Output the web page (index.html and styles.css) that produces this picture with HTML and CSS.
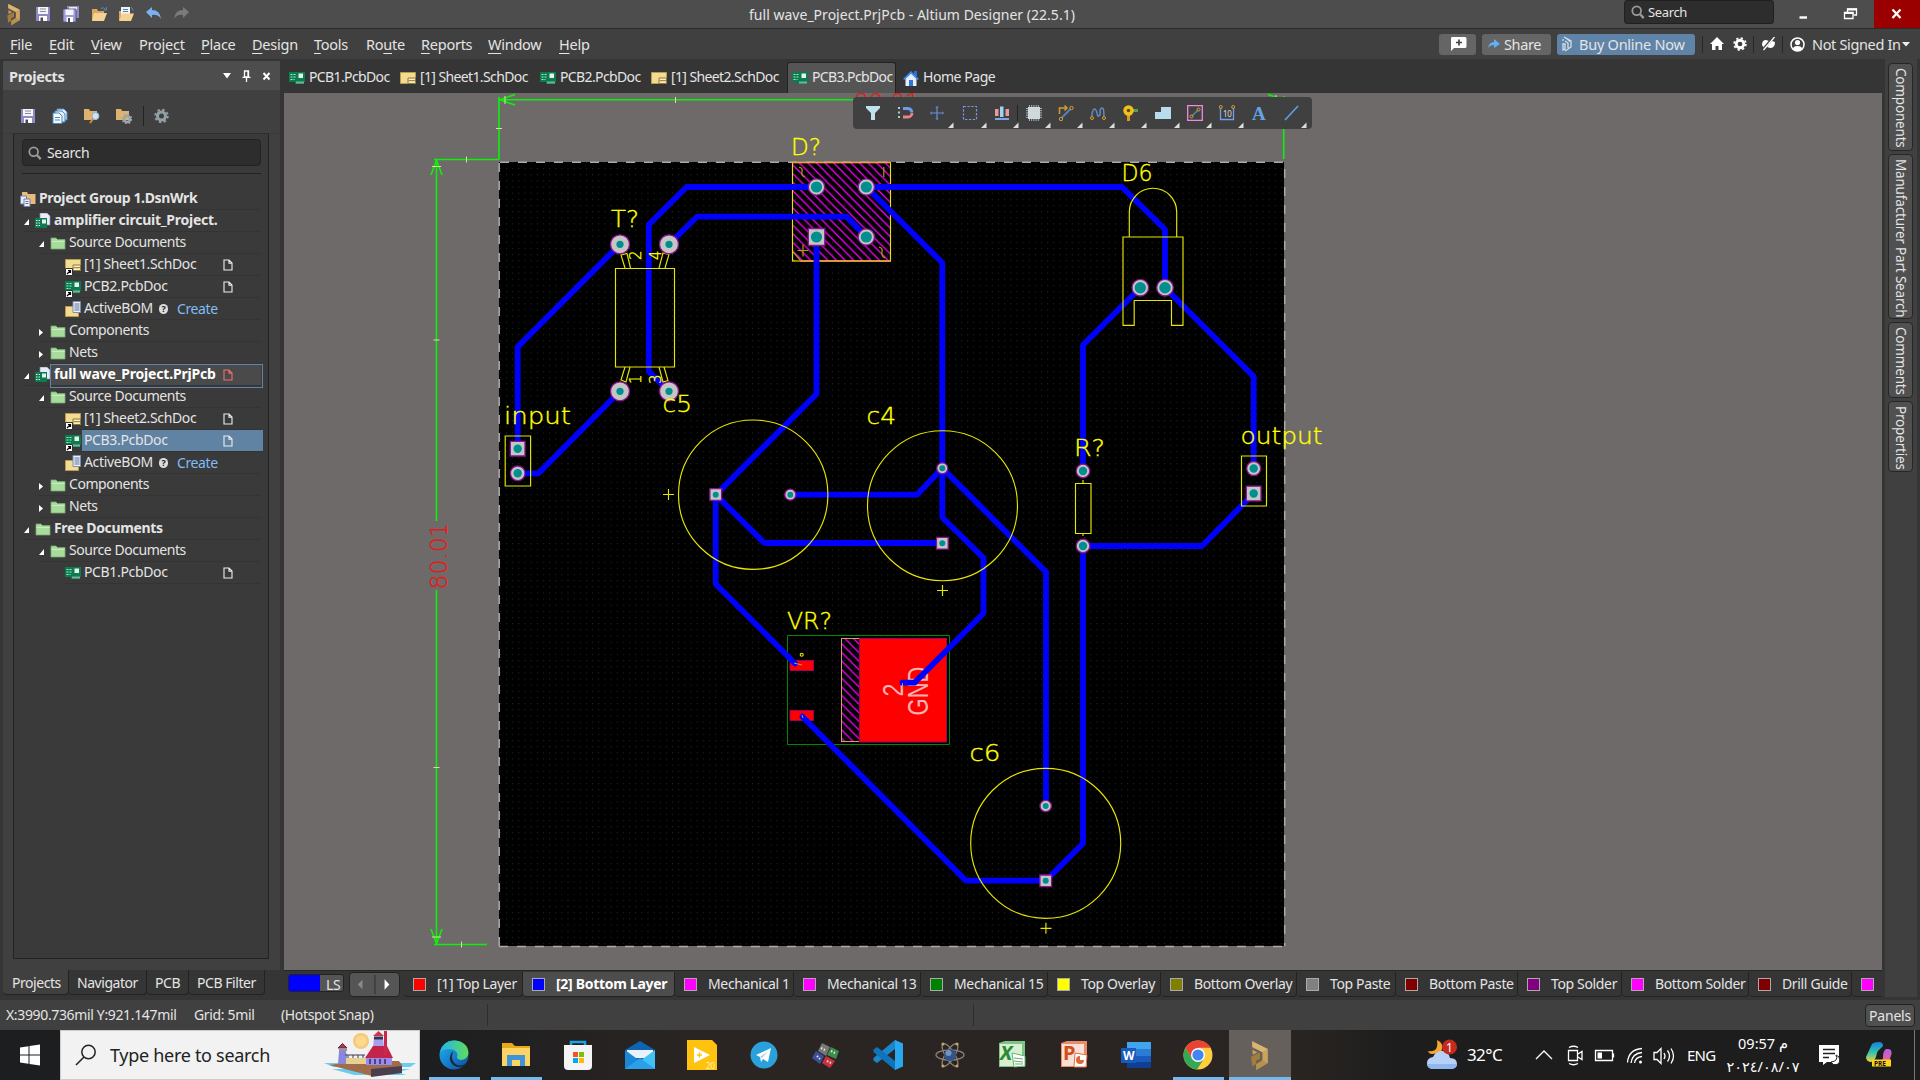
FILE: index.html
```html
<!DOCTYPE html>
<html lang="en">
<head>
<meta charset="utf-8">
<title>full wave_Project.PrjPcb - Altium Designer (22.5.1)</title>
<link rel="stylesheet" href="styles.css">
</head>
<body>
<svg class="defs" width="0" height="0">
  <defs>
    <symbol id="save" viewBox="0 0 16 16"><path d="M1 1h14v14H1z" fill="#8d8bc4"/><path d="M3 1h10v7H3z" fill="#f4f4fa"/><path d="M5 3h6M5 5.500h6" stroke="#8a8a99"/><path d="M4 10h8v5H4z" fill="#fff"/><path d="M5.500 11.500h2.500V15H5.500z" fill="#44446c"/></symbol>
    <symbol id="saveall" viewBox="0 0 16 16"><path d="M4 0h12v12H4z" fill="#8d8bc4"/><path d="M6 1h8v3H6z" fill="#eee"/><path d="M0 3h13v13H0z" fill="#a09ed6" stroke="#44446c" stroke-width=".7"/><path d="M2.500 3.500h8V9h-8z" fill="#f4f4fa"/><path d="M3.500 11h6.500v5H3.500z" fill="#fff"/><path d="M5 12h2v4H5z" fill="#44446c"/></symbol>
    <symbol id="open" viewBox="0 0 16 16"><path d="M1 3h5l1 2h6v9H1z" fill="#d9a95f"/><path d="M3 7h13l-3 8H1z" fill="#f6d193"/><path d="M10 2.500q3-2 4.500 1M15.500 1v3h-3" fill="none" stroke="#4a8fc0"/></symbol>
    <symbol id="opendoc" viewBox="0 0 16 16"><path d="M1 5h3v9H1z" fill="#d9a95f"/><path d="M3 1h9v10H3z" fill="#eef4fb"/><path d="M5 3.500h5M5 5.500h5" stroke="#5582aa"/><path d="M4 7.500h12L13 15H1z" fill="#f6d193"/><path d="M13 1.500q2 0 2 3" fill="none" stroke="#4a8fc0"/></symbol>
    <symbol id="undo" viewBox="0 0 16 16"><path d="M0 6l6-5v3q8 0 9 9-3-5-9-4v3z" fill="#7db1ee"/></symbol>
    <symbol id="redo" viewBox="0 0 16 16"><path d="M16 6l-6-5v3q-8 0-9 9 3-5 9-4v3z" fill="#7b7b7b"/></symbol>
    <symbol id="pcb" viewBox="0 0 16 16"><path d="M0 2h16v10h-1v2H6v-2H0z" fill="#0d7b50"/><path d="M1.500 4.500h5M1.500 7h5M1.500 9.500h4" stroke="#a5e9c0" stroke-width="1.200" stroke-dasharray="2 1"/><path d="M9.500 3.500h4.500v4.500H9.500z" fill="#e5f2ea"/><path d="M7.500 12.500h7" stroke="#d2f0dd" stroke-width="2" stroke-dasharray="1 1"/></symbol>
    <symbol id="sch" viewBox="0 0 16 16"><path d="M.5 2.500h15v11H.5z" fill="#f3dc8f" stroke="#b89b54"/><path d="M8 8h7.500v5.500H8z" fill="#fbeeb7" stroke="#8c773c"/><path d="M8.500 10.700h6.500" stroke="#8c773c"/></symbol>
    <symbol id="short" viewBox="0 0 8 8"><path d="M.5.5h7v7h-7z" fill="#fff" stroke="#333"/><path d="M2 6l3-3M3 2.500h2.500V5" stroke="#000" fill="none" stroke-width="1.200"/></symbol>
    <symbol id="bom" viewBox="0 0 16 16"><path d="M.5 5.500h13v10H.5z" fill="#f3dc8f" stroke="#b89b54"/><path d="M8 .5h7.500v11H8z" fill="#edf1fa" stroke="#7b8db4"/><path d="M9.500 3h5M9.500 5h5M9.500 7h5M9.500 9h5" stroke="#5a6f9d"/></symbol>
    <symbol id="folder" viewBox="0 0 16 16"><path d="M1 3h5l1.500 1.500H15V14H1z" fill="#a8dc9c" stroke="#77a86e" stroke-width=".8"/><path d="M1.500 6h13v1h-13z" fill="#c6eebc"/></symbol>
    <symbol id="prj" viewBox="0 0 16 16"><path d="M5 0h7l3 3v9H5z" fill="#e9edf8" stroke="#8894b5" stroke-width=".7"/><path d="M0 5h12v10H0z" fill="#0d7b50"/><path d="M1 7.500h4M1 10h4M1 12.500h4" stroke="#d9f5e3" stroke-dasharray="1.500 1"/><path d="M7 6.500h4v4H7z" fill="#e5f2ea"/></symbol>
    <symbol id="grp" viewBox="0 0 16 16"><path d="M2 1h5l1 2h7.500v10H2z" fill="#e9bb79"/><path d="M.5 5h6v8h-6z" fill="#e6ecf8" stroke="#6f7fa8"/><path d="M4 8h6v7.500H4z" fill="#edf1fa" stroke="#6f7fa8"/><path d="M5.500 10.500h3M5.500 12.500h3" stroke="#5a6f9d"/></symbol>
    <symbol id="doc" viewBox="0 0 10 12"><path d="M1 1h5l3 3v7H1zM6 1v3.200h3" fill="none" stroke="currentColor" stroke-width="1.100"/></symbol>
    <symbol id="gear" viewBox="0 0 16 16"><circle cx="8" cy="8" r="4.300" fill="none" stroke="currentColor" stroke-width="3.200"/><circle cx="8" cy="8" r="6.700" fill="none" stroke="currentColor" stroke-width="2" stroke-dasharray="2.600 2.660"/></symbol>
    <symbol id="mag" viewBox="0 0 16 16"><circle cx="6.500" cy="6.500" r="5" fill="none" stroke="currentColor" stroke-width="2"/><path d="M10.500 10.500l4 4.500" stroke="currentColor" stroke-width="2.600"/></symbol>
    <symbol id="logo" viewBox="0 0 16 24"><path d="M2 1l12 6v11L5 23.500v-5l5-3V9.500L2 6z" fill="#b8924d"/><path d="M2 1l12 6-4 2.500L2 5z" fill="#d9b571"/><path d="M10 9.500L14 7v11l-4-2.500z" fill="#c9a35f"/><path d="M1 13l7-3.500v5L5 16v2.500l-3 2z" fill="#a17c3d"/><path d="M2 7.500l4 2-3.500 2z" fill="#c9a35f"/></symbol>
    <path id="tri" d="M24.500 17.500V23h-5.500z" fill="#ddd"/>
    <pattern id="dots" x="506" y="168" width="6.150" height="6.150" patternUnits="userSpaceOnUse"><path d="M0 0h1v1H0z" fill="#262626"/></pattern>
    <pattern id="hatch" width="8.600" height="8.600" patternUnits="userSpaceOnUse"><path d="M-1-1l11 11M-1 7.600l2.200 2.200M7.600-1l2 2" stroke="#f0f" stroke-width="1.200"/></pattern>
    <linearGradient id="edge" x1="0" y1="0" x2="1" y2="1"><stop offset="0" stop-color="#1cb4e8"/><stop offset=".5" stop-color="#1681d0"/><stop offset="1" stop-color="#0c4a9d"/></linearGradient>
    <linearGradient id="edge2" x1="0" y1="0" x2="1" y2="0"><stop offset="0" stop-color="#22b3ee"/><stop offset="1" stop-color="#5fdc5a"/></linearGradient>
    <linearGradient id="cop" x1="0" y1="0" x2="0" y2="1"><stop offset="0" stop-color="#1b7fe0"/><stop offset=".5" stop-color="#2cc3b0"/><stop offset="1" stop-color="#f3d43a"/></linearGradient>
    <linearGradient id="cop2" x1="0" y1="0" x2="0" y2="1"><stop offset="0" stop-color="#b45cf0"/><stop offset="1" stop-color="#fb6a6a"/></linearGradient>
  </defs>
</svg>
<div class="app">
  <header class="title">
    <div class="quick">
      <svg class="q-logo"><use href="#logo"/></svg>
      <svg><use href="#save"/></svg><svg><use href="#saveall"/></svg><svg><use href="#open"/></svg><svg><use href="#opendoc"/></svg><svg><use href="#undo"/></svg><svg><use href="#redo"/></svg>
    </div>
    <div class="caption">full wave_Project.PrjPcb - Altium Designer (22.5.1)</div>
    <div class="winbar">
      <div class="tsearch"><svg><use href="#mag"/></svg><span>Search</span></div>
      <svg class="wb" viewBox="0 0 46 28"><path d="M17.500 17.500h7.500" stroke="#fff" stroke-width="2.400"/></svg>
      <svg class="wb" viewBox="0 0 46 28"><path d="M19.500 13v-4h9v6h-3" fill="none" stroke="#fff" stroke-width="1.300"/><path d="M19 9.500h10" stroke="#fff" stroke-width="2"/><path d="M16.500 12.500h8.500v6h-8.500z" fill="none" stroke="#fff" stroke-width="1.300"/><path d="M16 13h9.500" stroke="#fff" stroke-width="2"/></svg>
      <svg class="wb close" viewBox="0 0 46 28"><path d="M18.500 9.500l8 8.500M26.500 9.500l-8 8.500" stroke="#fff" stroke-width="2.200"/></svg>
    </div>
  </header>
  <nav class="menu">
    <div class="items"><span><u>F</u>ile</span><span><u>E</u>dit</span><span><u>V</u>iew</span><span>Proje<u>c</u>t</span><span><u>P</u>lace</span><span><u>D</u>esign</span><span><u>T</u>ools</span><span>Ro<u>u</u>te</span><span><u>R</u>eports</span><span><u>W</u>indow</span><span><u>H</u>elp</span></div>
    <div class="account">
      <div class="btn note"><svg width="18" height="16" viewBox="0 0 18 16"><path d="M3 1h13q1.500 0 1.500 1.500v8q0 1.500-1.500 1.500H5l-3 3V2.500Q2 1 3 1z" fill="#fff"/><path d="M10 3.500v6M7 6.500h6" stroke="#444" stroke-width="1.700"/></svg></div>
      <div class="btn share"><svg width="12" height="12" viewBox="0 0 12 12"><path d="M0 10q1-6 6-6V1l6 5-6 4V7Q2 7 0 10z" fill="#64b0f4"/></svg><span>Share</span></div>
      <div class="btn buy"><svg width="11" height="16" viewBox="0 0 11 16"><path d="M2 1l7 4v6l-6 4M3 5l3 2v5M5 3l3 2.500M1 3v2M1 8v6l2-1V8z" fill="none" stroke="#d6dfe8" stroke-width="1.300"/></svg><span>Buy Online Now</span></div>
      <i class="vs"></i>
      <svg width="14" height="14" viewBox="0 0 14 14"><path d="M7 0l7 7h-2v6H8.500V9h-3v4H2V7H0z" fill="#fff"/></svg>
      <svg class="g" width="14" height="14"><use href="#gear"/></svg>
      <i class="vs"></i>
      <svg width="15" height="14" viewBox="0 0 15 14"><path d="M1 8q0-5 4-5l3 1L3 11zM14 5q0 6-5 6l-3-1 5-6z" fill="#fff"/><path d="M12 0L1 13" stroke="#404040" stroke-width="1.500"/><path d="M13.500 0L2.500 13" stroke="#fff" stroke-width="1.300"/></svg>
      <i class="vs"></i>
      <svg width="15" height="15" viewBox="0 0 15 15"><circle cx="7.500" cy="7.500" r="6.500" fill="none" stroke="#fff" stroke-width="1.500"/><circle cx="7.500" cy="5.500" r="2.600" fill="#fff"/><path d="M3 12q0-3 4.500-3t4.500 3l-2 2H5z" fill="#fff"/></svg>
      <span class="signin">Not Signed In</span>
      <svg width="8" height="5" viewBox="0 0 8 5"><path d="M0 0h8L4 4.500z" fill="#eee"/></svg>
    </div>
  </nav>
  <main class="work">
    <aside class="panel">
      <div class="phead"><b>Projects</b><svg width="50" height="12" viewBox="0 0 50 12"><path d="M0 3h8L4 8.500z" fill="#fff"/><path d="M21.500 1h4v6h-4zM25 1v6M19.500 7.300h8M23.500 7v5" fill="none" stroke="#fff" stroke-width="1.300"/><path d="M40.500 3l6 6.500M46.500 3l-6 6.500" stroke="#fff" stroke-width="1.900"/></svg></div>
      <div class="ptools">
        <svg><use href="#save"/></svg>
        <svg viewBox="0 0 16 16"><path d="M5 1h7l3 3v8H5z" fill="#dcecf8" stroke="#4e88ba"/><path d="M3 3h7l3 3v8H3z" fill="#dcecf8" stroke="#4e88ba"/><path d="M1 5h6l3 3v7.500H1z" fill="#f4faff" stroke="#4e88ba"/><path d="M3 9.500h5M3 12h5" stroke="#4e88ba"/></svg>
        <svg viewBox="0 0 16 16"><path d="M0 1h5l1 2h7v9H0z" fill="#dfb271"/><circle cx="11.500" cy="8" r="3.500" fill="#cfe4f3" stroke="#8eb0c8"/><path d="M9 11l-3 4" stroke="#d78b38" stroke-width="2"/></svg>
        <svg viewBox="0 0 16 16"><path d="M0 1h5l1 2h7v9H0z" fill="#dfb271"/><circle cx="11" cy="11" r="3" fill="none" stroke="#9aa7ac" stroke-width="2.600"/><circle cx="11" cy="11" r="4.600" fill="none" stroke="#9aa7ac" stroke-width="1.500" stroke-dasharray="1.800 1.800"/></svg>
        <i></i>
        <svg class="pg"><use href="#gear"/></svg>
      </div>
      <div class="tree">
        <div class="search"><svg><use href="#mag"/></svg><span>Search</span></div>
        <div class="rows">
          <div class="row l0"><svg class="ic"><use href="#grp"/></svg><b>Project Group 1.DsnWrk</b></div>
          <div class="row l1 open"><em></em><svg class="ic"><use href="#prj"/></svg><b class="w1">amplifier circuit_Project.</b></div>
          <div class="row l2 open"><em></em><svg class="ic"><use href="#folder"/></svg><span>Source Documents</span></div>
          <div class="row l3"><svg class="ic"><use href="#sch"/></svg><svg class="sc"><use href="#short"/></svg><span>[1] Sheet1.SchDoc</span><svg class="dc"><use href="#doc"/></svg></div>
          <div class="row l3"><svg class="ic"><use href="#pcb"/></svg><svg class="sc"><use href="#short"/></svg><span>PCB2.PcbDoc</span><svg class="dc"><use href="#doc"/></svg></div>
          <div class="row l3"><svg class="ic"><use href="#bom"/></svg><span>ActiveBOM</span><q>?</q><a>Create</a></div>
          <div class="row l2 shut"><em></em><svg class="ic"><use href="#folder"/></svg><span>Components</span></div>
          <div class="row l2 shut"><em></em><svg class="ic"><use href="#folder"/></svg><span>Nets</span></div>
          <div class="row l1 open cur"><em></em><svg class="ic"><use href="#prj"/></svg><b class="w2">full wave_Project.PrjPcb</b><svg class="dc red"><use href="#doc"/></svg></div>
          <div class="row l2 open"><em></em><svg class="ic"><use href="#folder"/></svg><span>Source Documents</span></div>
          <div class="row l3"><svg class="ic"><use href="#sch"/></svg><svg class="sc"><use href="#short"/></svg><span>[1] Sheet2.SchDoc</span><svg class="dc"><use href="#doc"/></svg></div>
          <div class="row l3 sel"><svg class="ic"><use href="#pcb"/></svg><svg class="sc"><use href="#short"/></svg><span>PCB3.PcbDoc</span><svg class="dc"><use href="#doc"/></svg></div>
          <div class="row l3"><svg class="ic"><use href="#bom"/></svg><span>ActiveBOM</span><q>?</q><a>Create</a></div>
          <div class="row l2 shut"><em></em><svg class="ic"><use href="#folder"/></svg><span>Components</span></div>
          <div class="row l2 shut"><em></em><svg class="ic"><use href="#folder"/></svg><span>Nets</span></div>
          <div class="row l1 open"><em></em><svg class="ic"><use href="#folder"/></svg><b>Free Documents</b></div>
          <div class="row l2 open"><em></em><svg class="ic"><use href="#folder"/></svg><span>Source Documents</span></div>
          <div class="row l3"><svg class="ic"><use href="#pcb"/></svg><span>PCB1.PcbDoc</span><svg class="dc"><use href="#doc"/></svg></div>
        </div>
      </div>
      <div class="ptabs"><span class="on">Projects</span><span>Navigator</span><span>PCB</span><span>PCB Filter</span></div>
    </aside>
    <section class="center">
      <div class="tabs">
        <div><svg><use href="#pcb"/></svg><span>PCB1.PcbDoc</span></div>
        <div><svg><use href="#sch"/></svg><span>[1] Sheet1.SchDoc</span></div>
        <div><svg><use href="#pcb"/></svg><span>PCB2.PcbDoc</span></div>
        <div><svg><use href="#sch"/></svg><span>[1] Sheet2.SchDoc</span></div>
        <div class="on"><svg><use href="#pcb"/></svg><span>PCB3.PcbDoc</span></div>
        <div class="home"><svg viewBox="0 0 16 16"><path d="M11 1h3v5h-3z" fill="#2f6fd0"/><path d="M2.500 8L8 3l5.500 5v8h-11z" fill="#e6eefc"/><path d="M0 9l8-8 8 8-1.500 1L8 3.800 1.500 10z" fill="#3c8bf0"/><path d="M6 10h4v6H6z" fill="#3473d8"/></svg><span>Home Page</span></div>
      </div>
      <div class="canvas">
        <svg class="board" viewBox="284 93 1598 879">
          <path d="M499 162h785v784H499z" fill="#000"/>
          <path d="M499 162h785v784H499z" fill="url(#dots)"/>
          <path d="M500 162.200h785" class="dash"/><path d="M499.200 163v783" class="dash"/><path d="M1284.700 169v777" class="dash"/><path d="M499 946.500h785" class="dash"/>
          <g class="dim">
            <path d="M499 97v62.500M434 159.500h65M436.500 160v361M436.500 590v355M434 944.500h53M499 99.800h784M1283.700 96v63"/>
            <path d="M515 94.500l-15 5.300 15 5.300M431 175l5.500-15 5.500 15M431 929l5.500 15 5.500-15M1268 94.500l15 5"/>
          </g>
          <path class="tick" d="M505 96v8M675.500 97v6M496 128.500h6M466.500 156.500v6M432 166.500h9M433.500 340h6M433.500 767.500h6M461.500 941.500v6M432 937h9M1276 95v8"/>
          <rect x="792.500" y="162.500" width="98" height="98.500" fill="url(#hatch)"/>
          <rect x="841.500" y="638.500" width="18" height="103" fill="url(#hatch)" stroke="#d8a060"/>
          <rect x="792.500" y="162.500" width="98" height="98.500" class="silk"/>
          <path d="M792 162.500h99M800 261h91" stroke="#f79a4e" stroke-width="1.300"/>
          <path d="M787.500 635.500h162v109h-162z" fill="none" stroke="#080"/>
          <g fill="#f00" stroke="#a00060"><path d="M859.500 638.500h87v103.500h-87z"/><path d="M790 660.500h23.500v10H790zM790 710.500h23.500v10H790z"/></g>
          <g class="padname"><text transform="translate(902.500 696.500) rotate(-90)" textLength="13" lengthAdjust="spacingAndGlyphs">2</text><text transform="translate(928 715.500) rotate(-90)" textLength="49" lengthAdjust="spacingAndGlyphs">GND</text></g>
          <g class="trace">
            <path d="M517.700 448.700V346.700L620 244.300"/><path d="M517.700 473.300h20.800L620 391.300"/>
            <path d="M816.500 187H686.500L648.800 224.500V371.500L669 391.300"/><path d="M669 244.300L697 216.700h149.700L866.300 237"/>
            <path d="M816.500 237V394L715.700 494.700L764.300 543h178"/><path d="M715.700 494.700V584L795 663.500"/>
            <path d="M866.300 187H1122L1165 229.500V287.700L1253.700 376.500V468.500"/><path d="M866.300 187L942.300 262.700V517.500L983.500 558v55.300L914.500 682.700h-12"/>
            <path d="M790.300 494.700H917L942.300 468.300L1046 572V806"/>
            <path d="M1140.300 287.700L1083 345V471"/><path d="M1253.700 493.500L1202 546H1083V843.500L1045.700 880.700H966L802.500 716.700"/>
          </g>
          <g class="silk dimmed"><path d="M883.800 167v10M803 244.500v12M797.500 250.500h11"/><path d="M799 167q4 1 3 5t3 5M879 247q4 1 3 5t3 6M793 252l8 9"/></g>
          <g class="silk">
            <path d="M615.500 268.500h59v98.500h-59z"/>
            <path d="M625 268l-4-13 6-1.500 3.500 14.500M659 268l4-15 6 1.500-4 13.500M625 367l-4 13 5 2 4-15M659 367l4 15 5-1.500-4-13.500"/>
            <path d="M505.200 436h25.400v50h-25.400zM1241.500 456h25v50h-25zM1075.500 483.500H1091v50h-15.500zM1083 480v3M1083 533v3"/>
            <path d="M1129.300 237V212a23.700 23.700 0 0 1 47.400 0V237M1123 237h60v88.300h-11.500V300.500h-37.300v24.800H1123z"/>
            <circle cx="753.200" cy="494.700" r="74.700"/><circle cx="942.500" cy="505.700" r="75"/><circle cx="1045.700" cy="843.300" r="75"/><circle cx="801.700" cy="654.700" r="1.500"/>
            <path d="M663 494.500h11M668.500 489v11M937 590.500h11M942.500 585v11M1040.500 928.300h11M1045.900 922.800v11"/>
          </g>
          <g class="pad">
            <circle cx="620" cy="244.300" r="9.500"/><circle cx="669" cy="244.300" r="9.500"/><circle cx="620" cy="391.300" r="9.500"/><circle cx="669" cy="391.300" r="9.500"/>
            <circle cx="816.500" cy="187" r="8.200"/><circle cx="866.300" cy="187" r="8.200"/><circle cx="866.300" cy="237" r="8.200"/><path d="M808.300 228.500h16.500v17h-16.500z"/>
            <circle cx="1140.300" cy="287.700" r="8.300"/><circle cx="1165" cy="287.700" r="8.300"/>
            <circle cx="517.700" cy="473.300" r="7.300"/><path d="M510.300 441.300h14.700v14.700h-14.700zM1246.300 486.200h14.700v14.700h-14.700z"/><circle cx="1253.700" cy="468.500" r="7"/>
            <circle cx="1083" cy="471" r="6.800"/><circle cx="1083" cy="546" r="6.800"/>
            <circle cx="790.300" cy="494.700" r="5.500"/><circle cx="942.300" cy="468.300" r="5.500"/><circle cx="1045.700" cy="806" r="5.700"/>
            <path d="M709.900 488.700h11.700v11.700h-11.700zM936.500 537.400h11.700v11.700h-11.700zM1039.900 875h11.700v11.700h-11.700z"/>
          </g>
          <g fill="#008f8f">
            <circle cx="620" cy="244.300" r="3.600"/><circle cx="669" cy="244.300" r="3.600"/><circle cx="620" cy="391.300" r="3.600"/><circle cx="669" cy="391.300" r="3.600"/>
            <circle cx="816.500" cy="187" r="5.600"/><circle cx="866.300" cy="187" r="5.600"/><circle cx="866.300" cy="237" r="5.600"/><circle cx="816.500" cy="237" r="5.600"/><circle cx="1140.300" cy="287.700" r="5.700"/><circle cx="1165" cy="287.700" r="5.700"/>
            <circle cx="517.700" cy="448.700" r="4.200"/><circle cx="517.700" cy="473.300" r="4.200"/><circle cx="1253.700" cy="468.500" r="4.200"/><circle cx="1253.700" cy="493.500" r="4.200"/><circle cx="1083" cy="471" r="4.200"/><circle cx="1083" cy="546" r="4.200"/>
            <circle cx="790.300" cy="494.700" r="3"/><circle cx="942.300" cy="468.300" r="3"/><circle cx="1045.700" cy="806" r="3"/><circle cx="715.700" cy="494.700" r="3"/><circle cx="942.300" cy="543.300" r="3"/><circle cx="1045.700" cy="880.800" r="3"/>
          </g>
          <path d="M794 663l8 2M902.500 683v6M802 715l1 3" stroke="#aaa060" fill="none"/>
          <g class="label">
            <text x="791" y="155" textLength="30" lengthAdjust="spacingAndGlyphs">D?</text><text x="611" y="226.500" textLength="28" lengthAdjust="spacingAndGlyphs">T?</text><text x="662.500" y="412" textLength="29.500" lengthAdjust="spacingAndGlyphs">c5</text><text x="866.500" y="423.500" textLength="29.500" lengthAdjust="spacingAndGlyphs">c4</text>
            <text x="504" y="423.500" textLength="67" lengthAdjust="spacingAndGlyphs">input</text><text x="1121.500" y="181" textLength="31" lengthAdjust="spacingAndGlyphs">D6</text><text x="1074" y="456" textLength="31" lengthAdjust="spacingAndGlyphs">R?</text><text x="1240.500" y="443.500" textLength="82" lengthAdjust="spacingAndGlyphs">output</text><text x="787" y="628.500" textLength="45" lengthAdjust="spacingAndGlyphs">VR?</text><text x="969.500" y="760.500" textLength="31" lengthAdjust="spacingAndGlyphs">c6</text>
          </g>
          <g class="label tiny"><text transform="translate(641 260) rotate(-90)">2</text><text transform="translate(661 260) rotate(-90)">4</text><text transform="translate(641 384) rotate(-90)">1</text><text transform="translate(661 384) rotate(-90)">3</text></g>
          <g class="label reddim"><text transform="translate(446.500 589.500) rotate(-90)" textLength="67" lengthAdjust="spacingAndGlyphs">80.01</text><text x="854" y="109.500" textLength="66" lengthAdjust="spacingAndGlyphs">80.01</text></g>
        </svg>
        <div class="active-bar">
          <svg viewBox="0 0 16 16"><path d="M1 1h14v2l-5 5v7H6V8L1 3z" fill="#bfe3ee"/></svg>
          <svg viewBox="0 0 16 16"><path d="M6 3.500h5a4.500 4.500 0 0 1 4 4" fill="none" stroke="#6b9de6" stroke-width="2.800"/><path d="M15 8a4 4 0 0 1-4 4H6" fill="none" stroke="#e98388" stroke-width="2.800"/><path d="M2 2v13" stroke="#aacbd5" stroke-width="2" stroke-dasharray="2 2.500"/></svg>
          <svg viewBox="0 0 16 16"><path d="M8 1.500v13M1.500 8h13" stroke="#698fe0" stroke-width="1.200"/><path d="M6.700 3L8 1.500 9.300 3M6.700 13L8 14.500 9.300 13M3 6.700L1.500 8 3 9.300M13 6.700L14.500 8 13 9.300" fill="none" stroke="#698fe0" stroke-width=".8"/><use href="#tri"/></svg>
          <svg viewBox="0 0 16 16"><path d="M1.500 1.500h13v13h-13z" fill="none" stroke="#7594ee" stroke-width="1.200" stroke-dasharray="2.400 1.500"/><use href="#tri"/></svg>
          <svg viewBox="0 0 16 16"><path d="M1 4h3.500v7H1zM11.500 4H15v7h-3.500z" fill="#e39b9b"/><path d="M6 1.500h3.500V12H6z" fill="#9fd3ef"/><path d="M1 14h14" stroke="#7fa5e6" stroke-width="2"/><use href="#tri"/></svg>
          <i></i>
          <svg viewBox="0 0 16 16"><path d="M3.500 0v16M5.700 0v16M7.900 0v16M10.100 0v16M12.300 0v16M0 3.500h16M0 5.700h16M0 7.900h16M0 10.100h16M0 12.300h16" stroke="#a3b1b9"/><path d="M2 2h12v12H2z" fill="#cfd8dd"/><use href="#tri"/></svg>
          <svg viewBox="0 0 16 16"><path d="M1.500 9V3h7M6.500.500L9 3 6.500 5.500" fill="none" stroke="#d59b2f" stroke-width="1.500"/><path d="M4 12.500l8.500-8.500" stroke="#557fc4" stroke-width="2"/><circle cx="3" cy="14" r="1.700" fill="none" stroke="#d9a030"/><circle cx="13.500" cy="3" r="1.700" fill="none" stroke="#d9a030"/><use href="#tri"/></svg>
          <svg viewBox="0 0 16 16"><path d="M2 11V9q1-5 2.500-5T7 8q.5 4 2 3T10 6q.5-3 2-3t1.700 3l.3 5" fill="none" stroke="#6489bf" stroke-width="1.500"/><circle cx="2" cy="13" r="1.500" fill="none" stroke="#d9a030"/><circle cx="14" cy="13" r="1.500" fill="none" stroke="#d9a030"/><use href="#tri"/></svg>
          <svg viewBox="0 0 16 16"><path d="M8 5.500h8" stroke="#58a044" stroke-width="3"/><path d="M6.500 8v8" stroke="#d99a1e" stroke-width="3"/><circle cx="6.500" cy="5.500" r="5.200" fill="#f2c01c"/><circle cx="6.500" cy="5.500" r="1.800" fill="#5d4a16"/><use href="#tri"/></svg>
          <svg viewBox="0 0 16 16"><path d="M0 14V7h6V2h10v12z" fill="#b9dcec"/><use href="#tri"/></svg>
          <svg viewBox="0 0 16 16"><path d="M.7.700h14.600v14.600H.700z" fill="none" stroke="#f08ae0" stroke-width="1.300"/><path d="M5 11l6-6" stroke="#587fb5" stroke-width="1.600"/><circle cx="4.500" cy="11.500" r="1.500" fill="none" stroke="#d9a030"/><circle cx="11.500" cy="4.500" r="1.500" fill="none" stroke="#d9a030"/><use href="#tri"/></svg>
          <svg viewBox="0 0 16 16"><path d="M1.500 3v11.500h13V3" fill="none" stroke="#6f9fe8" stroke-width="1.300"/><circle cx="1.800" cy="2" r="1.500" fill="none" stroke="#d9a030"/><circle cx="14.200" cy="2" r="1.500" fill="none" stroke="#d9a030"/><text x="4" y="12" font-size="8" fill="#ddd">10</text><use href="#tri"/></svg>
          <svg viewBox="0 0 16 16"><text x="1" y="15" font-size="19" class="bigA">A</text></svg>
          <svg viewBox="0 0 16 16"><path d="M2 15L15 1" stroke="#5e9ee6" stroke-width="1.700"/><use href="#tri" x="-1"/></svg>
        </div>
      </div>
      <div class="layers">
        <div class="ls"><i></i><span>LS</span></div>
        <div class="nav"><svg width="49" height="23" viewBox="0 0 51 24"><path d="M13 7v10L8 12z" fill="#8a8a8a"/><path d="M26 2v20" stroke="#2d2d2d"/><path d="M36 6.500v11l5-5.500z" fill="#fff"/></svg></div>
        <div class="lt" style="width:119px"><i style="background:#f00"></i><span>[1] Top Layer</span></div>
        <div class="lt on" style="width:152px"><i style="background:#00f"></i><b>[2] Bottom Layer</b></div>
        <div class="lt" style="width:119px"><i style="background:#f0f"></i><span>Mechanical 1</span></div>
        <div class="lt" style="width:127px"><i style="background:#f0f"></i><span>Mechanical 13</span></div>
        <div class="lt" style="width:127px"><i style="background:#008000"></i><span>Mechanical 15</span></div>
        <div class="lt" style="width:113px"><i style="background:#ff0"></i><span>Top Overlay</span></div>
        <div class="lt" style="width:136px"><i style="background:#808000"></i><span>Bottom Overlay</span></div>
        <div class="lt" style="width:99px"><i style="background:#808080"></i><span>Top Paste</span></div>
        <div class="lt" style="width:122px"><i style="background:#800000"></i><span>Bottom Paste</span></div>
        <div class="lt" style="width:104px"><i style="background:#800080"></i><span>Top Solder</span></div>
        <div class="lt" style="width:127px"><i style="background:#f0f"></i><span>Bottom Solder</span></div>
        <div class="lt" style="width:103px"><i style="background:#800000"></i><span>Drill Guide</span></div>
        <div class="lt last"><i style="background:#f0f"></i></div>
      </div>
    </section>
    <aside class="rail"><span style="height:88px">Components</span><span style="height:165px">Manufacturer Part Search</span><span style="height:76px">Comments</span><span style="height:71px">Properties</span></aside>
  </main>
  <div class="status"><span>X:3990.736mil Y:921.147mil</span><span>Grid: 5mil</span><span>(Hotspot Snap)</span><i></i><i></i><div class="panels">Panels</div></div>
  <footer class="taskbar">
    <svg class="start" width="60" height="50" viewBox="0 0 60 50"><path d="M20 17.500l8.500-1.200V24.500H20zM29.500 16l10.500-1.500v10H29.500zM20 25.500h8.500v8.200L20 32.500zM29.500 25.500H40v10L29.500 34z" fill="#fff"/></svg>
    <div class="wsearch">
      <svg width="22" height="22" viewBox="0 0 22 22"><circle cx="13.500" cy="8" r="6.700" fill="none" stroke="#222" stroke-width="1.500"/><path d="M9 13L1 21" stroke="#222" stroke-width="1.600"/></svg>
      <span>Type here to search</span>
      <svg class="light" width="92" height="48" viewBox="0 0 92 48"><circle cx="37" cy="10" r="8" fill="#f8c878"/><circle cx="37" cy="10" r="5.500" fill="#fbd98d"/><path d="M0 32h92l-6 4H10zM8 38h78l-12 3 8 3H30z" fill="#68cdf0"/><path d="M5 34l30-4h40l3 4v5l-30 6z" fill="#a06c4a"/><path d="M47 38l31-3v7l-31 4z" fill="#4b3f4e"/><path d="M15 20h7l2 13H14z" fill="#8887e0"/><path d="M14 17l4.500-4.500L23 17zM15 19h8" fill="#c32e4d" stroke="#4a3048"/><path d="M21 24h20M24 24v8M29 24v8M34 24v8M39 24v8" stroke="#3e3a55"/><path d="M22 27h20v6H22z" fill="#e5d291"/><path d="M42 25h26v9H42z" fill="#9a8ced"/><path d="M50 6h9l1 11H49z" fill="#a6a0ee"/><path d="M41 27l8-12h14l6 12z" fill="#c42449"/><path d="M49 5l5.500-5L60 5z" fill="#ca3555"/><path d="M50 7h9" stroke="#363250" stroke-width="3"/><path d="M60 0h3v24h-3z" fill="#c9284f"/><path d="M46 28v5M51 28v5M56 28v5M61 28v5" stroke="#4c4482" stroke-width="2"/></svg>
    </div>
    <div class="apps">
      <div class="app1 run"><svg viewBox="0 0 30 30"><circle cx="15" cy="15" r="14.500" fill="url(#edge)"/><path d="M1 12Q4 0 16 .5 29 2 29.500 13q-1 7-8 7-5-1-3-5-1-6-8-6-6 0-9.500 3z" fill="url(#edge2)"/><path d="M13 12q-5 7 1 13 8 5 13-1-9 4-13-3-2-4 0-9z" fill="#1d2a38"/></svg></div>
      <div class="app1 run"><svg viewBox="0 0 30 30"><path d="M1 3h10l3 3h15v20H1z" fill="#e9a818"/><path d="M1 8h28v18H1z" fill="#fdd366"/><path d="M6 26V15h18v11h-5v-6h-8v6z" fill="#3d94d8"/></svg></div>
      <div class="app1"><svg viewBox="0 0 30 30"><path d="M8 5V2h14v3" fill="none" stroke="#1ba1e8" stroke-width="2.500"/><path d="M1 5h28v21q0 4-4 4H5q-4 0-4-4z" fill="#f4f4f4"/><path d="M10 12h5v5h-5z" fill="#f35325"/><path d="M16 12h5v5h-5z" fill="#81bc06"/><path d="M10 18h5v5h-5z" fill="#05a6f0"/><path d="M16 18h5v5h-5z" fill="#ffba08"/></svg></div>
      <div class="app1"><svg viewBox="0 0 30 30"><path d="M0 10L15 1l15 9v19H0z" fill="#0f63b5"/><path d="M2 10h26v8H2z" fill="#e9f2f8"/><path d="M0 10l15 11-15 8z" fill="#1a86d8"/><path d="M30 10L15 21l15 8z" fill="#41c1f4"/><path d="M0 29l15-11 15 11z" fill="#2aa0e8"/></svg></div>
      <div class="app1"><svg viewBox="0 0 30 30"><path d="M0 0h25l5 5v25H0z" fill="#ffc20e"/><path d="M7 7l16 8-16 8z" fill="#fff"/><path d="M10 15h5M12.500 12.500v5" stroke="#ffc20e" stroke-width="1.300"/><text x="19" y="28.500" font-size="8" fill="#fff2c0">20</text></svg></div>
      <div class="app1"><svg viewBox="0 0 30 30"><circle cx="15" cy="15" r="13.500" fill="#2aa1da"/><path d="M7 15l15-7-3 14-5-3-2 3-1-5z" fill="#fff"/><path d="M11 17l8-6-6 7z" fill="#a8cfe3"/></svg></div>
      <div class="app1"><svg viewBox="0 0 30 30"><path d="M11 3l8 4-4 9-8-5z" fill="#777"/><path d="M20 7l8 4-3 8-9-4z" fill="#3f8d4c"/><path d="M5 11l8 5-4 8-8-6z" fill="#3c4f9b"/><path d="M15 16l9 5-5 7-8-5z" fill="#c8323e"/><path d="M10 8l4 2M20 11l4 2M6 16l3 3M16 21l4 2" stroke="#e6e6e6" stroke-dasharray="1.500 1.500" stroke-width="2"/></svg></div>
      <div class="app1"><svg viewBox="0 0 30 30"><path d="M22 0l8 3.500v23L22 30z" fill="#29a8f0"/><path d="M22 0v9L4 23l-3.500-2.500V18z" fill="#1a86cb"/><path d="M22 30v-9L4 7 .5 9.500V12z" fill="#0f73bb"/></svg></div>
      <div class="app1"><svg viewBox="0 0 30 30"><g fill="none" stroke="#8b8377" stroke-width="1.300"><ellipse cx="15" cy="15" rx="14" ry="5"/><ellipse cx="15" cy="15" rx="13" ry="4.500" transform="rotate(58 15 15)"/><ellipse cx="15" cy="15" rx="13" ry="4.500" transform="rotate(-58 15 15)"/></g><circle cx="15" cy="15" r="6" fill="#31548f"/><circle cx="13.500" cy="13" r="3" fill="#7892b9"/><g fill="#c9a36a"><circle cx="8" cy="4" r="1.600"/><circle cx="22" cy="4" r="1.600"/><circle cx="8" cy="26" r="1.600"/><circle cx="22" cy="26" r="1.600"/></g></svg></div>
      <div class="app1"><svg viewBox="0 0 30 30"><path d="M2 3l6-2h20v26H2z" fill="#7cc586"/><path d="M3 4h22v22H3z" fill="#d8efd2"/><path d="M15 13l13 3v10l-11 1z" fill="#fff" stroke="#6ab36e"/><path d="M17 18l9 1M17 21l9 1M18 24l8 0" stroke="#62ad68"/><text x="3" y="20" font-size="20" font-weight="700" font-style="italic" fill="#2b8a36">X</text></svg></div>
      <div class="app1"><svg viewBox="0 0 30 30"><path d="M2 3l6-2h20v26H2z" fill="#e88c6c"/><path d="M3 4h22v22H3z" fill="#fbe1d4"/><path d="M16 13l12 2-1 12H15z" fill="#fff" stroke="#de7046"/><circle cx="21" cy="20" r="4" fill="#e0663a"/><path d="M21 20v-4h4v4z" fill="#fff"/><text x="4" y="20" font-size="20" font-weight="700" fill="#d34c1b">P</text></svg></div>
      <div class="app1"><svg viewBox="0 0 30 30"><path d="M6 2h24v7H6z" fill="#41a5ee"/><path d="M6 9h24v7H6z" fill="#2b7cd3"/><path d="M6 16h24v6H6z" fill="#185abd"/><path d="M6 22h24v6H6z" fill="#103f91"/><path d="M0 8h15v15H0z" fill="#185abd"/><text x="2" y="19.500" font-size="12" font-weight="700" fill="#fff">W</text></svg></div>
      <div class="app1 run"><svg viewBox="0 0 30 30"><circle cx="15" cy="15" r="14.500" fill="#ffcd40"/><path d="M2.400 7.700A14.500 14.500 0 0 1 27.600 7.700H15L9 18.500z" fill="#ea4335"/><path d="M2.400 7.700A14.500 14.500 0 0 0 14 29.500L21 18.500 9 18.500z" fill="#34a853"/><circle cx="15" cy="15" r="7" fill="#fff"/><circle cx="15" cy="15" r="5.600" fill="#4285f4"/></svg></div>
      <div class="app1 cur"><svg class="big" viewBox="0 0 16 24"><use href="#logo" width="16" height="24"/></svg></div>
    </div>
    <div class="tray">
      <svg class="t1" width="32" height="32" viewBox="0 0 32 32"><path d="M11 1q8 3 4 13l-9 1q-3 0-4-3 11 2 9-11z" fill="#f7a62b"/><path d="M6 30q-5-1-5-6t6-6q3-7 10-6 6 1 7 7 7 0 7 6 0 4-5 5z" fill="#b7d0f7"/><path d="M6 30q-5-1-5-5h30q0 4-5 5z" fill="#8fb6ee"/><circle cx="23.500" cy="8" r="7.500" fill="#c42b1c"/><text x="20" y="12.500" font-size="12" fill="#fff">1</text></svg>
      <span class="temp">32°C</span>
      <svg class="t2" width="146" height="24" viewBox="1532 1043 146 24" fill="none" stroke="#fff" stroke-width="1.300"><path d="M1536 1059l8-8 8 8M1568.500 1050.500h9v10h-9zM1578 1054l4-2.500v8l-4-2.500M1569 1047.500q4.500-2.500 9 0M1569 1063.500q4.500 2.500 9 0M1595.500 1050.500h17v10h-17zM1613.500 1053.500v4"/><path d="M1597.500 1052.500h4.500v6h-4.500z" fill="#fff" stroke="none"/><path d="M1627.500 1062.500q1-13 14.500-14M1631 1063q1-9.500 11-10.500M1634.500 1063q1-6 7.500-6.500M1654 1052.500h3l4-4v15l-4-4h-3zM1664 1053q2 3 0 6M1667.500 1050.500q4 5.500 0 11M1671 1048.500q5 7.500 0 15"/><circle cx="1640.500" cy="1062" r="1.500" fill="#fff" stroke="none"/></svg>
      <span class="eng">ENG</span>
      <div class="clock"><span>09:57 م</span><span class="date">٢٠٢٤/٠٨/٠٧</span></div>
      <svg class="t3" width="21" height="21" viewBox="0 0 21 21"><path d="M0 0h20v17H8l-4 3v-3H0z" fill="#fff"/><path d="M4 4.500h12M4 8.500h12M4 12.500h6" stroke="#222" stroke-width="1.300"/><path d="M17 10q3 6-5 7 2 4 6 2.500t2-7.500z" fill="#fff" stroke="#222"/></svg>
      <svg class="t4" width="26" height="26" viewBox="0 0 26 26"><path d="M6 2q2-2 7-2 4 0 4 4L13 8q-2 1-3 7-2 5-6 5-4-1-4-5z" fill="url(#cop)"/><path d="M16 7h6q4 0 3.500 5L23 20q-2 4-7 4h-4q5-2 5-9 0-6 3-8z" fill="url(#cop2)"/><path d="M6 17.500h19v7H6z" fill="#ffd21c"/><text x="8" y="23.700" font-size="6.500" font-weight="700" fill="#111">PRE</text></svg>
      <i class="desk"></i>
    </div>
  </footer>
</div>
</body>
</html>
```
FILE: styles.css
```css
* { box-sizing: border-box; }
body { margin: 0; background: #404040; color: #e4e4e4; font: 14px/20px "Noto Sans", "Open Sans", sans-serif; letter-spacing: -0.35px; white-space: nowrap; }
i, em { font-style: normal; }
svg { flex: none; }
.defs { display: block; }
.app { width: 1920px; height: 1080px; display: flex; flex-direction: column; overflow: hidden; }
.title { height: 29px; background: #4d4d4d; border-bottom: 1px solid #2b2b2b; display: grid; grid-template-columns: 700px 1fr 296px; }
.quick { display: flex; align-items: center; gap: 12px; padding-left: 6px; }
.quick svg { width: 16px; height: 16px; }
.quick .q-logo { width: 16px; height: 23px; margin-right: 1px; }
.quick svg:nth-child(n+4) { margin-left: -0.5px; }
.caption { padding: 5px 0 0 49px; letter-spacing: 0.020px; }
.winbar { display: flex; height: 28px; }
.tsearch { width: 150px; height: 24px; background: #2d2d2d; border: 1px solid #202020; border-radius: 3px; display: flex; align-items: center; padding-left: 6px; gap: 3px; margin-right: 8px; font-size: 13px; }
.tsearch svg, .search svg { width: 14px; height: 14px; color: #9a9a9a; }
.wb { width: 46px; height: 28px; }
.close { background: #9b0000; }
.menu { height: 31px; display: flex; justify-content: space-between; align-items: center; font-size: 14.500px; }
.items { display: grid; grid-template-columns: 39px 42px 48px 62px 51px 62px 52px 55px 67px 71px 50px; padding-left: 10px; letter-spacing: -0.250px; }
.items u { text-underline-offset: 3px; }
.account { display: flex; align-items: center; width: 481px; }
.btn { height: 21px; border-radius: 3px; background: #656565; display: flex; align-items: center; margin-right: 6px; }
.note { width: 37px; justify-content: center; }
.share { width: 69px; padding-left: 6px; gap: 4px; }
.buy { width: 138px; background: #6083a8; padding-left: 5px; gap: 6px; letter-spacing: -0.250px; }
.vs { width: 1px; height: 17px; background: #282828; margin: 0 7px 0 6px; }
.buy + .vs { margin-left: 1px; }
.account .g { color: #fff; margin-left: 9px; }
.signin { margin: 0 1px 0 7px; }
.work { height: 941px; background: #353535; display: flex; }
.panel { width: 284px; padding: 2px 4px 0 3px; display: flex; flex-direction: column; }
.phead { height: 29px; background: #4d4d4d; display: flex; align-items: center; justify-content: space-between; padding: 0 7px 0 6px; font-size: 14.500px; }
.ptools { height: 43px; background: #404040; display: flex; align-items: center; gap: 16px; padding: 9px 0 0 17px; flex: none; }
.ptools svg { width: 16px; height: 16px; }
.ptools i { width: 1px; height: 20px; background: #222; margin: 0 -6px 0 -5px; }
.ptools .pg { color: #93a0a5; width: 15px; margin-left: 0; }
.tree { height: 826px; border: 1px solid #222; background: #3a3a3a; padding: 5px 7px 0 6px; box-shadow: 0 0 0 11px #404040; margin: 0 11px 11px 10px; flex: none; clip-path: inset(0 -11px -11px -10px); }
.search { height: 27px; border: 1px solid #222; background: #2d2d2d; border-radius: 4px; display: flex; align-items: center; padding-left: 5px; gap: 5px; margin: 0 0 0 2px; }
.rows { border-top: 1px solid #222; margin: 7px 0 0 2px; padding-top: 14px; }
.row { height: 22px; display: flex; align-items: center; position: relative; border-bottom: 1px solid #343434; }
.row .ic { width: 16px; height: 16px; margin-right: 3px; }
.l0 { margin-left: -2px; }
.l1 { margin-left: 2px; }
.l1 em { width: 11px; }
.l2 { margin-left: 17px; }
.l3 { margin-left: 43px; }
.row em { width: 11px; height: 10px; flex: none; }
.open em::after { content: ""; display: block; width: 5px; height: 6px; margin-top: 3px; background: #fff; clip-path: polygon(100% 0, 100% 100%, 0 100%); }
.shut em::after { content: ""; display: block; width: 4px; height: 7px; margin-top: 3px; background: #fff; clip-path: polygon(0 0, 100% 50%, 0 100%); }
.row .sc { position: absolute; left: 0; top: 14px; width: 8px; height: 8px; }
.row .dc { position: absolute; right: 28px; top: 5px; width: 10px; height: 12px; color: #eee; }
.row .red { color: #f0706c; }
.row b, .row span { position: relative; top: -1px; }
.row .w1 { letter-spacing: -0.250px; }
.row.l2 span { letter-spacing: -0.450px; }
.row q { quotes: none; width: 9px; height: 10px; border-radius: 5px; background: #ddd; color: #222; font: bold 9px/10px "Noto Sans", sans-serif; text-align: center; margin: 0 9px 0 6px; }
.row a { color: #80bdf5; }
.cur b { color: #fff; letter-spacing: -0.180px; }
.row.cur { background: linear-gradient(#4a4a4a, #4a4a4a) 27px 0 / 100% 100% no-repeat; }
.row.cur::after { content: ""; position: absolute; left: 26px; right: -2px; top: 0; height: 22px; border: 1px solid #6083a8; }
.row.sel { background: linear-gradient(#6083a3, #6083a3) 17px 0 / 100% 100% no-repeat; margin-right: -2px; }
.row.sel .dc { right: 30px; }
.ptabs { display: flex; height: 26px; margin-top: -1px; letter-spacing: -0.450px; }
.ptabs span { border: 1px solid #222; border-left: 0; border-radius: 0 0 4px 4px; padding: 3px 0 0 8px; width: 78px; }
.ptabs .on { background: #404040; width: 66px; border-top: 0; padding: 4px 0 0 9px; }
.ptabs span:nth-child(3) { width: 42px; }
.ptabs span:nth-child(4) { width: 76px; }
.center { width: 1598px; }
.tabs { height: 34px; display: grid; grid-template-columns: 111px 140px 111px 136px 111px 120px; padding: 3px 0 0 5px; letter-spacing: -0.620px; }
.tabs div { display: flex; align-items: center; gap: 4px; }
.tabs svg { width: 16px; height: 16px; }
.tabs .on { background: #555; border-radius: 3px 3px 0 0; border: 1px solid #222; border-bottom: 0; margin-right: 2px; padding-left: 4px; }
.tabs .home { padding-left: 5px; gap: 4px; letter-spacing: -0.450px; }
.tabs span { position: relative; top: -1px; }
.canvas { height: 877px; background: #6e6a69; position: relative; overflow: hidden; }
.board { display: block; width: 1598px; height: 879px; }
.dash { stroke: #aaa; stroke-width: 1.500; stroke-dasharray: 9 9; fill: none; }
.dim { stroke: #0cf00c; stroke-width: 1.600; fill: none; }
.tick { stroke: #e5d9a0; fill: none; }
.silk { stroke: #e6e600; stroke-width: 1.150; fill: none; }
.dimmed { stroke: #b0a000; }
.trace { fill: none; stroke: #00f; stroke-width: 5.800; stroke-linejoin: round; stroke-linecap: round; }
.pad { fill: #c5c5c5; stroke: #8c1390; stroke-width: 1.300; }
.padname { font: 29px "Liberation Sans", sans-serif; fill: #ffb0b0; letter-spacing: 0; }
.label { font: 200 22.500px "DejaVu Sans Light", "DejaVu Sans", sans-serif; fill: #ff0; stroke: #ff0; stroke-width: 0.350; letter-spacing: 0; }
.tiny { font-size: 15px; }
.reddim { fill: #e01c1c; stroke: #e01c1c; }
.active-bar { position: absolute; left: 569px; top: 4px; width: 459px; height: 32px; border-radius: 4px; background: #404040; display: flex; align-items: center; gap: 16.200px; padding-left: 12px; }
.active-bar svg { width: 16px; height: 16px; overflow: visible; }
.active-bar i { width: 1px; height: 16px; background: #222; margin: 0 -8.700px; }
.bigA { font-family: "Liberation Serif", serif; font-weight: 700; fill: #62a4e6; }
.layers { height: 30px; display: flex; padding-top: 1px; border-top: 1px solid #262626; overflow: hidden; }
.ls { width: 56px; height: 18px; border: 1px solid #222; display: flex; margin: 2px 5px 0 4px; background: #555; border-radius: 3px; flex: none; }
.ls i { width: 31px; background: #00f; margin-right: 6px; }
.ls span { line-height: 19px; }
.nav { width: 51px; height: 25px; border: 1px solid #222; background: #555; border-radius: 4px; margin: 0 4px 0 0; flex: none; }
.lt { height: 25px; border: 1px solid #222; border-left: 0; border-top: 0; border-radius: 0 0 4px 4px; display: flex; align-items: center; padding-left: 9px; gap: 11px; flex: none; }
.lt i { width: 13px; height: 13px; border: 1px solid #aaa; flex: none; }
.lt.on { background: #4d4d4d; color: #fff; }
.lt.on b { letter-spacing: -0.300px; }
.lt.last { width: 60px; }
.rail { width: 35px; margin-left: 3px; background: #404040; padding: 4px 3px 0; display: flex; flex-direction: column; gap: 3px; height: 938px; border-right: 3px solid #353535; }
.rail span { writing-mode: vertical-rl; border: 1px solid #262626; border-radius: 4px; background: #505050; width: 25px; padding-top: 4px; line-height: 22px; font-size: 13.500px; letter-spacing: -0.180px; }
.status { height: 30px; display: flex; align-items: center; padding: 0 5px 0 6px; }
.status span:nth-child(1) { width: 188px; }
.status span:nth-child(2) { width: 87px; }
.status span:nth-child(3) { width: 206px; }
.status i { width: 1px; height: 22px; background: #2e2e2e; margin-right: 485px; }
.status i + i { margin-right: auto; }
.panels { width: 50px; height: 23px; border: 1px solid #222; border-radius: 4px; background: #505050; text-align: center; line-height: 21px; letter-spacing: -0.200px; }
.taskbar { height: 50px; background: linear-gradient(90deg, #1d1e20 0, #1d1e20 420px, #2a2522 700px, #2a2522 1290px, #1d1d1d 1400px); display: flex; letter-spacing: 0; }
.wsearch { width: 360px; height: 50px; background: #f2f2f2; border: 1px solid #ccc; color: #222; font-size: 18px; display: flex; align-items: center; padding-left: 14px; letter-spacing: -0.3px; }
.wsearch span { margin: 0 auto 0 13px; }
.light { margin-right: 3px; }
.apps { display: flex; width: 872px; padding-left: 3px; }
.app1 { width: 62px; height: 50px; display: grid; place-items: center; flex: none; }
.app1 svg { width: 30px; height: 30px; }
.app1 .big { width: 22px; height: 31px; }
.run { background: linear-gradient(#76b9ed, #76b9ed) 50% 100% / 51px 3px no-repeat; }
.app1.cur { background: linear-gradient(#76b9ed, #76b9ed) 0 100% / 100% 3px no-repeat, #65605c; }
.tray { display: flex; align-items: center; flex: 1; color: #fff; }
.t1 { margin-left: 134px; }
.temp { margin: 0 28px 0 9px; font-size: 17px; width: 37px; letter-spacing: -0.600px; }
.eng { margin-left: 9px; width: 29px; font-size: 15px; letter-spacing: -0.800px; }
.clock { width: 78px; margin-left: 8px; display: flex; flex-direction: column; align-items: center; font: 14.500px/23px "Noto Sans", "DejaVu Sans", sans-serif; letter-spacing: -0.700px; }
.date { letter-spacing: 0; }
.t3 { margin-left: 17px; }
.t4 { margin-left: 26px; }
.desk { width: 1px; height: 50px; background: #777; margin-left: 22px; }
```
